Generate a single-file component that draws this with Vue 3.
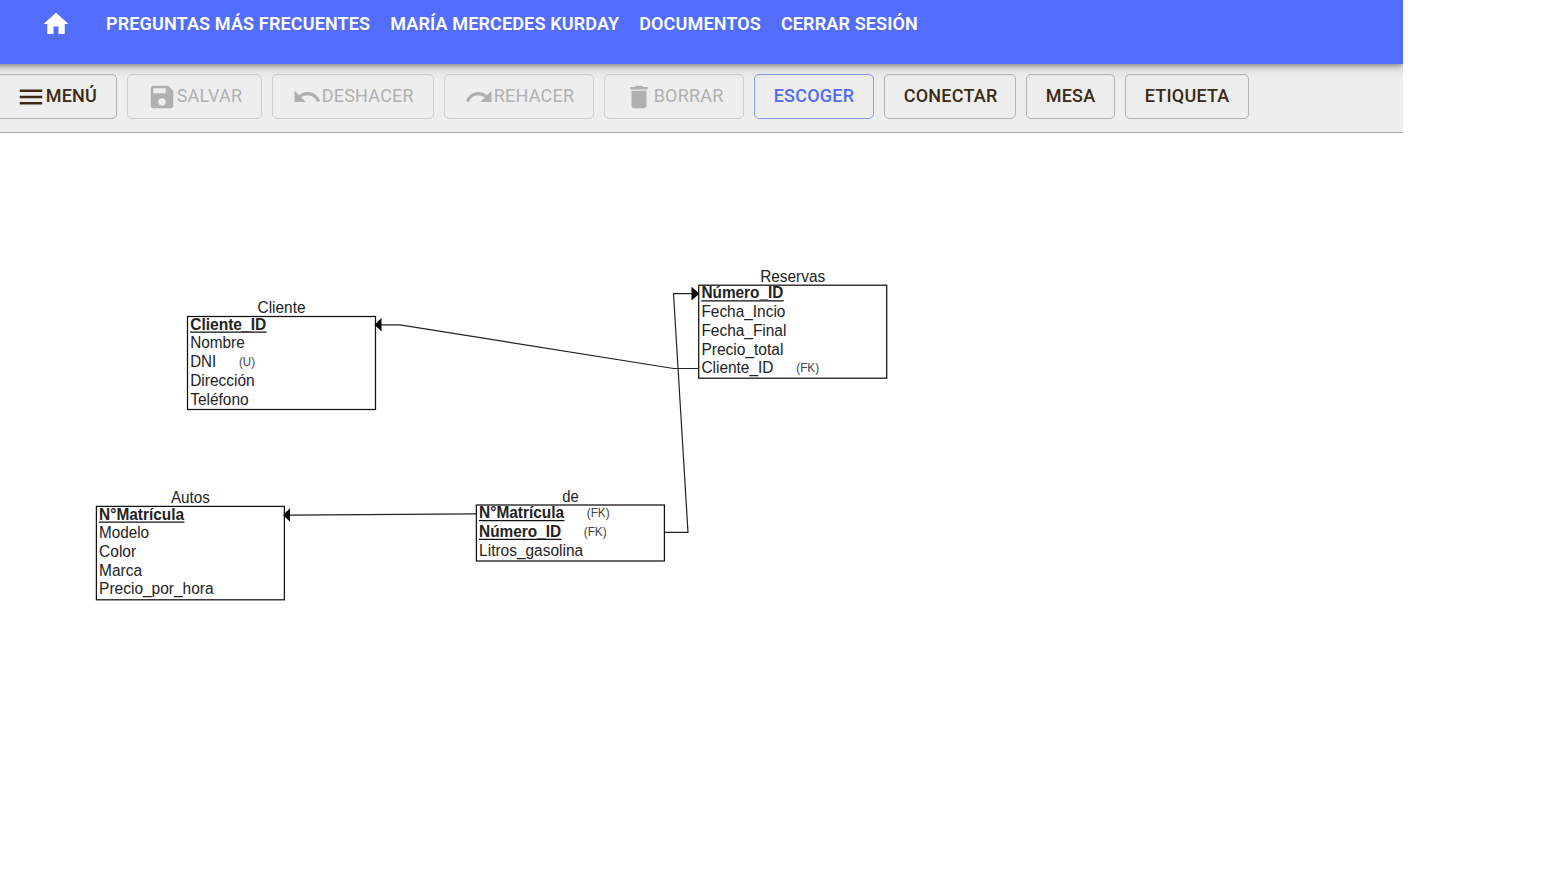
<script setup>
const links = ['PREGUNTAS MÁS FRECUENTES', 'MARÍA MERCEDES KURDAY', 'DOCUMENTOS', 'CERRAR SESIÓN']

const icons = {
  menu: 'M3 18h18v-2H3v2zm0-5h18v-2H3v2zm0-7v2h18V6H3z',
  save: 'M17 3H5c-1.11 0-2 .9-2 2v14c0 1.1.89 2 2 2h14c1.1 0 2-.9 2-2V7l-4-4zm-5 16c-1.66 0-3-1.34-3-3s1.34-3 3-3 3 1.34 3 3-1.34 3-3 3zm3-10H5V5h10v4z',
  undo: 'M12.5 8c-2.65 0-5.05.99-6.9 2.6L2 7v9h9l-3.62-3.62c1.39-1.16 3.16-1.88 5.12-1.88 3.54 0 6.55 2.31 7.6 5.5l2.37-.78C21.08 11.03 17.15 8 12.5 8z',
  redo: 'M18.4 10.6C16.55 8.99 14.15 8 11.5 8c-4.65 0-8.58 3.03-9.96 7.22L3.9 16c1.05-3.19 4.05-5.5 7.6-5.5 1.95 0 3.73.72 5.12 1.88L13 16h9V7l-3.6 3.6z',
  trash: 'M6 19c0 1.1.9 2 2 2h8c1.1 0 2-.9 2-2V7H6v12zM19 4h-3.5l-1-1h-5l-1 1H5v2h14V4z'
}

const tools = [
  { id: 'menu', label: 'MENÚ', icon: icons.menu },
  { id: 'save', label: 'SALVAR', icon: icons.save, disabled: true },
  { id: 'undo', label: 'DESHACER', icon: icons.undo, disabled: true },
  { id: 'redo', label: 'REHACER', icon: icons.redo, disabled: true },
  { id: 'trash', label: 'BORRAR', icon: icons.trash, disabled: true },
  { id: 'pick', label: 'ESCOGER', active: true },
  { id: 'connect', label: 'CONECTAR' },
  { id: 'table', label: 'MESA' },
  { id: 'label', label: 'ETIQUETA' }
]

// Each row: text, rendered width, key flag, optional tag with its x and width
const tables = [
  {
    name: 'Cliente', nameWidth: 48, x: 187.5, y: 316.5, h: 93,
    rows: [
      { t: 'Cliente_ID', w: 76, key: true },
      { t: 'Nombre', w: 54.5 },
      { t: 'DNI', w: 26, tag: '(U)', tagX: 51.5, tagW: 16 },
      { t: 'Dirección', w: 64.5 },
      { t: 'Teléfono', w: 58.5 }
    ]
  },
  {
    name: 'Reservas', nameWidth: 65, x: 698.7, y: 285.2, h: 93,
    rows: [
      { t: 'Número_ID', w: 82, key: true },
      { t: 'Fecha_Incio', w: 84 },
      { t: 'Fecha_Final', w: 85 },
      { t: 'Precio_total', w: 82 },
      { t: 'Cliente_ID', w: 72, tag: '(FK)', tagX: 97.5, tagW: 23 }
    ]
  },
  {
    name: 'Autos', nameWidth: 39, x: 96.4, y: 506.4, h: 93.4,
    rows: [
      { t: 'N°Matrícula', w: 85, key: true },
      { t: 'Modelo', w: 50 },
      { t: 'Color', w: 37 },
      { t: 'Marca', w: 43 },
      { t: 'Precio_por_hora', w: 114.5 }
    ]
  },
  {
    name: 'de', nameWidth: 16.5, x: 476.4, y: 505, h: 56,
    rows: [
      { t: 'N°Matrícula', w: 85, key: true, tag: '(FK)', tagX: 110.3, tagW: 23 },
      { t: 'Número_ID', w: 82, key: true, tag: '(FK)', tagX: 107.3, tagW: 23 },
      { t: 'Litros_gasolina', w: 104 }
    ]
  }
]
</script>

<template>
  <div class="app">
    <header class="topbar">
      <svg class="icon home" viewBox="0 0 24 24"><path d="M10 20v-6h4v6h5v-8h3L12 3 2 12h3v8z" /></svg>
      <nav class="links">
        <a v-for="link in links" :key="link">{{ link }}</a>
      </nav>
    </header>
    <div class="toolbar">
      <button
        v-for="tool in tools"
        :key="tool.id"
        class="tool"
        :class="['tool-' + tool.id, { active: tool.active }]"
        :disabled="tool.disabled"
      >
        <svg v-if="tool.icon" class="icon" viewBox="0 0 24 24"><path :d="tool.icon" /></svg>
        <span class="caption">{{ tool.label }}</span>
      </button>
    </div>
    <svg class="canvas" width="1403" height="762" viewBox="0 133 1403 762">
      <g class="wires">
        <path d="M698 368.5H673.5L400 324.8H381" />
        <path d="M664 532.4H688L673.5 293.7H692" />
        <path d="M476 513.8L290 515.1" />
      </g>
      <path d="M374.5 324.8L381.5 318V331.5Z" />
      <path d="M699.5 293.7L691.5 286.8V300.6Z" />
      <path d="M283 515L290 508.3V521.8Z" />
      <g v-for="table in tables" :key="table.name">
        <text class="name" :x="table.x + 94 - table.nameWidth / 2" :y="table.y - 3.3" :textLength="table.nameWidth" lengthAdjust="spacingAndGlyphs">{{ table.name }}</text>
        <rect class="box" :x="table.x" :y="table.y" width="188" :height="table.h" />
        <g v-for="(row, i) in table.rows" :key="row.t">
          <text :class="{ key: row.key }" :x="table.x + 2.7" :y="table.y + 13.2 + i * 18.7" :textLength="row.w" lengthAdjust="spacingAndGlyphs">{{ row.t }}</text>
          <path v-if="row.key" class="rule" :d="`M${table.x + 2.5} ${table.y + 15.6 + i * 18.7}h${row.w + 0.5}`" />
          <text v-if="row.tag" class="tag" :x="table.x + row.tagX" :y="table.y + 12.2 + i * 18.7" :textLength="row.tagW" lengthAdjust="spacingAndGlyphs">{{ row.tag }}</text>
        </g>
      </g>
    </svg>
  </div>
</template>

<style>
body {
  background: #fff;
  overflow: hidden;
}
</style>

<style scoped>
.app {
  width: 1403px;
  height: 895px;
  overflow: hidden;
  font-family: Roboto, sans-serif;
}
.icon {
  width: 30px;
  height: 30px;
  flex: none;
  fill: currentColor;
}
.topbar {
  position: relative;
  z-index: 1;
  box-sizing: border-box;
  height: 64px;
  display: flex;
  align-items: flex-start;
  margin-left: -20px;
  padding: 9px 0 0 61px;
  background: #536dfe;
  color: #fff;
  box-shadow: 0 2px 5px rgba(0, 0, 0, 0.34), 0 4px 12px rgba(0, 0, 0, 0.15);
}
.links {
  display: flex;
  gap: 19.9px;
  margin-left: 35px;
  font-size: 18px;
  font-weight: 600;
  letter-spacing: 0.15px;
  line-height: 30px;
  white-space: nowrap;
}
.toolbar {
  box-sizing: border-box;
  height: 69px;
  display: flex;
  gap: 10px;
  margin-left: -4px;
  padding-top: 10px;
  background: #eee;
  border-bottom: 1px solid #a3a3a3;
}
.tool {
  box-sizing: border-box;
  flex: none;
  height: 45px;
  display: flex;
  align-items: center;
  padding: 0 0 0 18.7px;
  border: 1px solid #b2b2b2;
  border-radius: 5px;
  background: transparent;
  color: #3c2a14;
  font-family: inherit;
  font-size: 18px;
  font-weight: 500;
  letter-spacing: 0.22px;
  line-height: 41px;
  white-space: nowrap;
}
.caption {
  padding-bottom: 2px;
}
.tool:disabled {
  border-color: #cdcdcd;
  color: #b0b0b0;
  font-weight: 400;
}
.tool.active {
  border-color: #8f9df0;
  color: #536bf0;
}
.tool-menu { width: 121px; }
.tool-save { width: 135px; }
.tool-undo { width: 162px; }
.tool-redo { width: 150px; }
.tool-trash { width: 140px; }
.tool-pick { width: 120px; }
.tool-connect { width: 132px; }
.tool-table { width: 89px; }
.tool-label { width: 124px; }
.canvas {
  display: block;
  font-family: "Liberation Sans", Arial, sans-serif;
  font-size: 16px;
}
.canvas text { fill: #222; }
.canvas .key { font-weight: 700; }
.canvas .tag { font-size: 12px; fill: #444; }
.box { fill: none; stroke: #111; stroke-width: 1.25; }
.rule { fill: none; stroke: #111; stroke-width: 1.25; }
.wires { fill: none; stroke: #222; stroke-width: 1.2; }
</style>
